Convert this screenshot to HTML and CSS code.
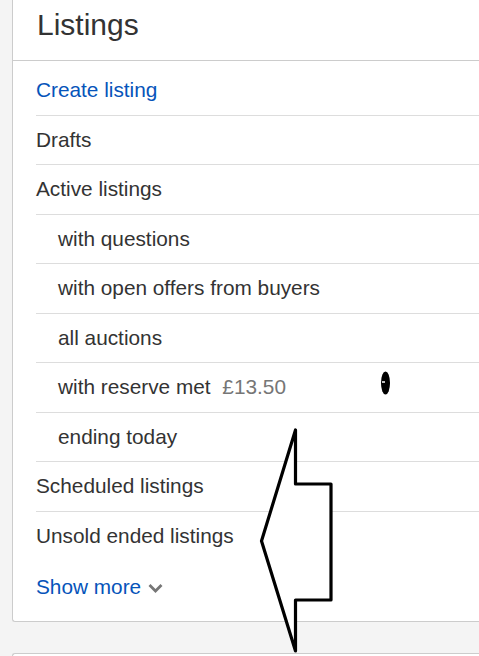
FILE: index.html
```html
<!DOCTYPE html>
<html lang="en">
<head>
  <meta charset="UTF-8">
  <meta name="viewport" content="width=device-width, initial-scale=1.0">
  <title>Listings</title>
  <link rel="stylesheet" href="styles.css">
</head>
<body>
  <section class="card">
    <h2 class="card-title">Listings</h2>
    <ul class="nav-list">
      <li><a href="#" class="link">Create listing</a></li>
      <li>Drafts</li>
      <li>Active listings</li>
      <li class="sub">with questions</li>
      <li class="sub">with open offers from buyers</li>
      <li class="sub">all auctions</li>
      <li class="sub">with reserve met <span class="price">£13.50</span></li>
      <li class="sub">ending today</li>
      <li>Scheduled listings</li>
      <li class="last">Unsold ended listings</li>
      <li class="more">
        <a href="#" class="link">Show more</a>
        <svg class="chevron" width="15" height="10" viewBox="0 0 15 10"><path d="M1.5 2 L7.5 8 L13.5 2" fill="none" stroke="#767676" stroke-width="2.8"/></svg>
      </li>
    </ul>
  </section>
  <section class="card next"></section>

  <!-- hand-drawn marks over the page -->
  <svg class="marks" width="479" height="656" viewBox="0 0 479 656">
    <ellipse cx="385.5" cy="383" rx="4.5" ry="11.5" fill="#000"/>
    <path d="M382 382 L385 382" stroke="#fff" stroke-width="1.5"/>
    <path d="M295.5 430 L295.5 484 L331 484 L331 600 L295.5 600 L295.5 651 L261.5 541 Z" fill="#fff" stroke="#000" stroke-width="3.2" stroke-linejoin="round"/>
  </svg>
</body>
</html>
```

FILE: styles.css
```css
:root {
  --link: #0654ba;
  --text: #333333;
  --muted: #767676;
  --border: #cccccc;
  --divider: #dddddd;
  --background: #f4f4f4;
}

body {
  margin: 0;
  padding: 0 0 0 12px;
  background: var(--background);
  font-family: Arial, "Liberation Sans", sans-serif;
  color: var(--text);
  overflow: hidden;
  height: 656px;
  position: relative;
}

.card {
  background: #fff;
  border: 1px solid var(--border);
  border-top: none;
  border-right: none;
  border-radius: 0 0 0 3px;
}

.card-title {
  margin: 0;
  padding: 6.5px 0 17.5px 24px;
  font-size: 30px;
  line-height: 36px;
  font-weight: normal;
  color: var(--text);
  border-bottom: 1px solid var(--border);
}

.nav-list {
  list-style: none;
  margin: 0;
  padding: 5px 0 9px 23px;
}

.nav-list li {
  font-size: 20.8px;
  line-height: 24.5px;
  padding: 12px 0;
  border-bottom: 1px solid var(--divider);
}

.nav-list li.sub {
  padding-left: 22px;
}

.nav-list li.last,
.nav-list li.more {
  border-bottom: none;
}

.nav-list li.more {
  display: flex;
  align-items: center;
  gap: 7px;
  padding-top: 15px;
}

.link {
  color: var(--link);
  text-decoration: none;
}

.price {
  color: var(--muted);
  margin-left: 6px;
}

.chevron {
  display: block;
  margin-top: 2px;
}

.card.next {
  margin-top: 31px;
  height: 2px;
  border-top: 1px solid var(--border);
  border-radius: 3px 0 0 0;
}

.marks {
  position: absolute;
  left: 0;
  top: 0;
  pointer-events: none;
}
```
